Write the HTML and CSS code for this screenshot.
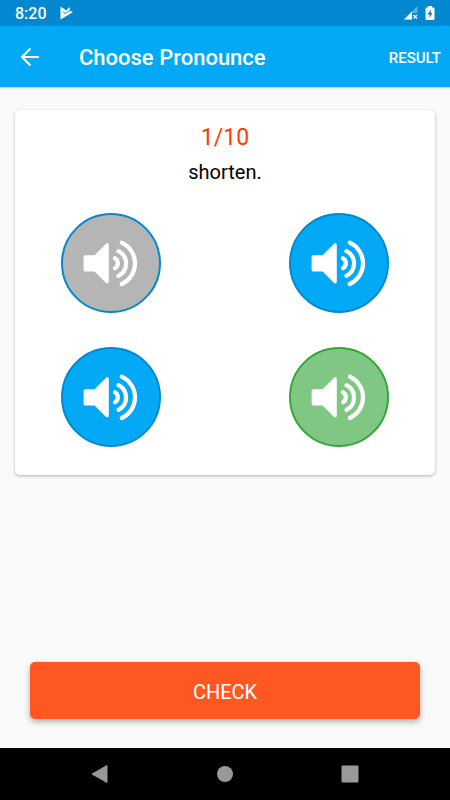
FILE: index.html
```html
<!DOCTYPE html>
<html lang="en">
<head>
<meta charset="utf-8">
<meta name="viewport" content="width=device-width, initial-scale=1">
<title>Choose Pronounce</title>
<link rel="stylesheet" href="styles.css">
</head>
<body>
<svg class="defs" aria-hidden="true">
  <symbol id="speaker" viewBox="0 0 100 100">
    <path d="M24.200 43.800H34.200L46.200 31.800V68.800L34.200 56.800H24.200Z" fill="#fff" stroke="#fff" stroke-width="3.200" stroke-linejoin="round"/>
    <path d="M54 45.200A5.800 5.800 0 0 1 54 55.200M57.500 38.200A13.800 13.800 0 0 1 57.500 62.800M60.800 29.600A22.800 22.800 0 0 1 60.800 71" fill="none" stroke="#fff" stroke-width="4.200" stroke-linecap="round"/>
  </symbol>
</svg>
<div class="screen">
  <div class="status">
    <span class="time">8:20</span>
    <svg class="play" viewBox="0 0 14 14" width="14" height="14" aria-hidden="true">
      <path d="M.5 .8L4.500 3L6 4.800L9.500 1L10.200 4.800L12.800 6.300L.5 13.500Z" fill="#fff"/>
      <path d="M3 5.500L5.500 7.800L10.500 3.500" fill="none" stroke="#0288d1"/>
    </svg>
    <svg class="signal" viewBox="0 0 14 14" width="14" height="14" aria-hidden="true">
      <path d="M13.500 0V7H8V13.500H0Z" fill="#fff" opacity=".35"/>
      <path d="M0 13.500L8 5.500V13.500Z" fill="#fff"/>
      <path d="M9.500 9L13 12.500M13 9L9.500 12.500" stroke="#fff" stroke-width="1.300"/>
    </svg>
    <svg class="battery" viewBox="0 0 10 14" width="10" height="14" aria-hidden="true">
      <path d="M3 0H7V1.500H8.500Q9.500 1.500 9.500 2.500V13Q9.500 14 8.500 14H1.500Q.5 14 .5 13V2.500Q.5 1.500 1.500 1.500H3Z" fill="#fff"/>
      <path d="M5.800 3.500L2.500 8.500H4.500V12L7.500 7H5.800Z" fill="#0288d1"/>
    </svg>
  </div>
  <header class="bar">
    <button class="back" type="button" aria-label="Back">
      <svg viewBox="0 0 20 20" width="20" height="20" aria-hidden="true"><path d="M19 10H2.500M10.500 1.500L2 10L10.500 18.500" fill="none" stroke="#fff" stroke-width="2"/></svg>
    </button>
    <h1 class="title">Choose Pronounce</h1>
    <button class="result" type="button">RESULT</button>
  </header>
  <main class="content">
    <section class="card">
      <p class="count">1/10</p>
      <p class="word">shorten.</p>
      <div class="sounds">
        <button class="sound played" type="button" aria-label="Sound 1"><svg><use href="#speaker"/></svg></button>
        <button class="sound" type="button" aria-label="Sound 2"><svg><use href="#speaker"/></svg></button>
        <button class="sound" type="button" aria-label="Sound 3"><svg><use href="#speaker"/></svg></button>
        <button class="sound chosen" type="button" aria-label="Sound 4"><svg><use href="#speaker"/></svg></button>
      </div>
    </section>
    <button class="check" type="button">CHECK</button>
  </main>
  <nav class="nav">
    <button type="button" aria-label="Back"><svg viewBox="0 0 18 18" width="18" height="18" aria-hidden="true"><path d="M1 9L16 .5V17.500Z" fill="#999" stroke="#999" stroke-linejoin="round"/></svg></button>
    <button type="button" aria-label="Home"><svg viewBox="0 0 18 18" width="18" height="18" aria-hidden="true"><circle cx="9" cy="9" r="8" fill="#999"/></svg></button>
    <button type="button" aria-label="Recent apps"><svg viewBox="0 0 18 18" width="18" height="18" aria-hidden="true"><rect x=".5" y=".5" width="17" height="17" rx="1" fill="#999"/></svg></button>
  </nav>
</div>
</body>
</html>
```
FILE: styles.css
```css
* { box-sizing: border-box; }
body { margin: 0; font-family: Roboto, sans-serif; background: #fafafa; }
button { border: 0; padding: 0; margin: 0; background: none; font: inherit; color: inherit; cursor: pointer; }
button svg { display: block; }
.defs { position: absolute; width: 0; height: 0; }
.screen { min-height: 100vh; display: flex; flex-direction: column; }
.status { display: flex; align-items: center; height: 26px; padding: 0 15px; background: #0288d1; color: #fff; }
.time { padding-top: 2px; font-size: 16px; font-weight: 500; line-height: 24px; }
.play { margin-left: 13px; }
.signal { margin-left: auto; }
.battery { margin-left: 7px; }
.bar { display: flex; align-items: center; height: 61px; padding: 0 9px 0 20px; background: #03a9f4; color: #fff; box-shadow: 0 1px 1px rgba(0, 0, 0, .15); }
.title { flex: 1; margin: 0 0 0 39px; padding-top: 2px; font-size: 22px; font-weight: 500; line-height: 32px; }
.result { padding-top: 2px; font-size: 15px; font-weight: 500; }
.content { flex: 1; display: flex; flex-direction: column; justify-content: space-between; padding: 23px 15px 29px; }
.card { padding: 14px 46px 28px; border-radius: 5px; background: #fff; box-shadow: 0 1px 3px rgba(0, 0, 0, .3); text-align: center; }
.count { margin: 0; font-size: 23px; line-height: 28px; color: #ff3d00; }
.word { margin: 8px 0 0; font-size: 20px; line-height: 24px; color: #000; }
.sounds { display: grid; grid-template-columns: auto auto; justify-content: space-between; gap: 34px; margin-top: 29px; }
.sound { width: 100px; height: 100px; border: 2px solid #0288d1; border-radius: 50%; background: #03a9f4; }
.sound svg { width: 100px; height: 100px; margin: -2px; }
.played { background: #b5b5b5; }
.chosen { background: #81c784; border-color: #35a63a; }
.check { height: 57px; margin: 0 15px; padding-top: 2px; border-radius: 5px; background: #ff5722; color: #fff; font-size: 20px; box-shadow: 0 3px 6px rgba(0, 0, 0, .3); }
.nav { display: flex; justify-content: center; align-items: center; gap: 107px; height: 52px; background: #000; }
```
